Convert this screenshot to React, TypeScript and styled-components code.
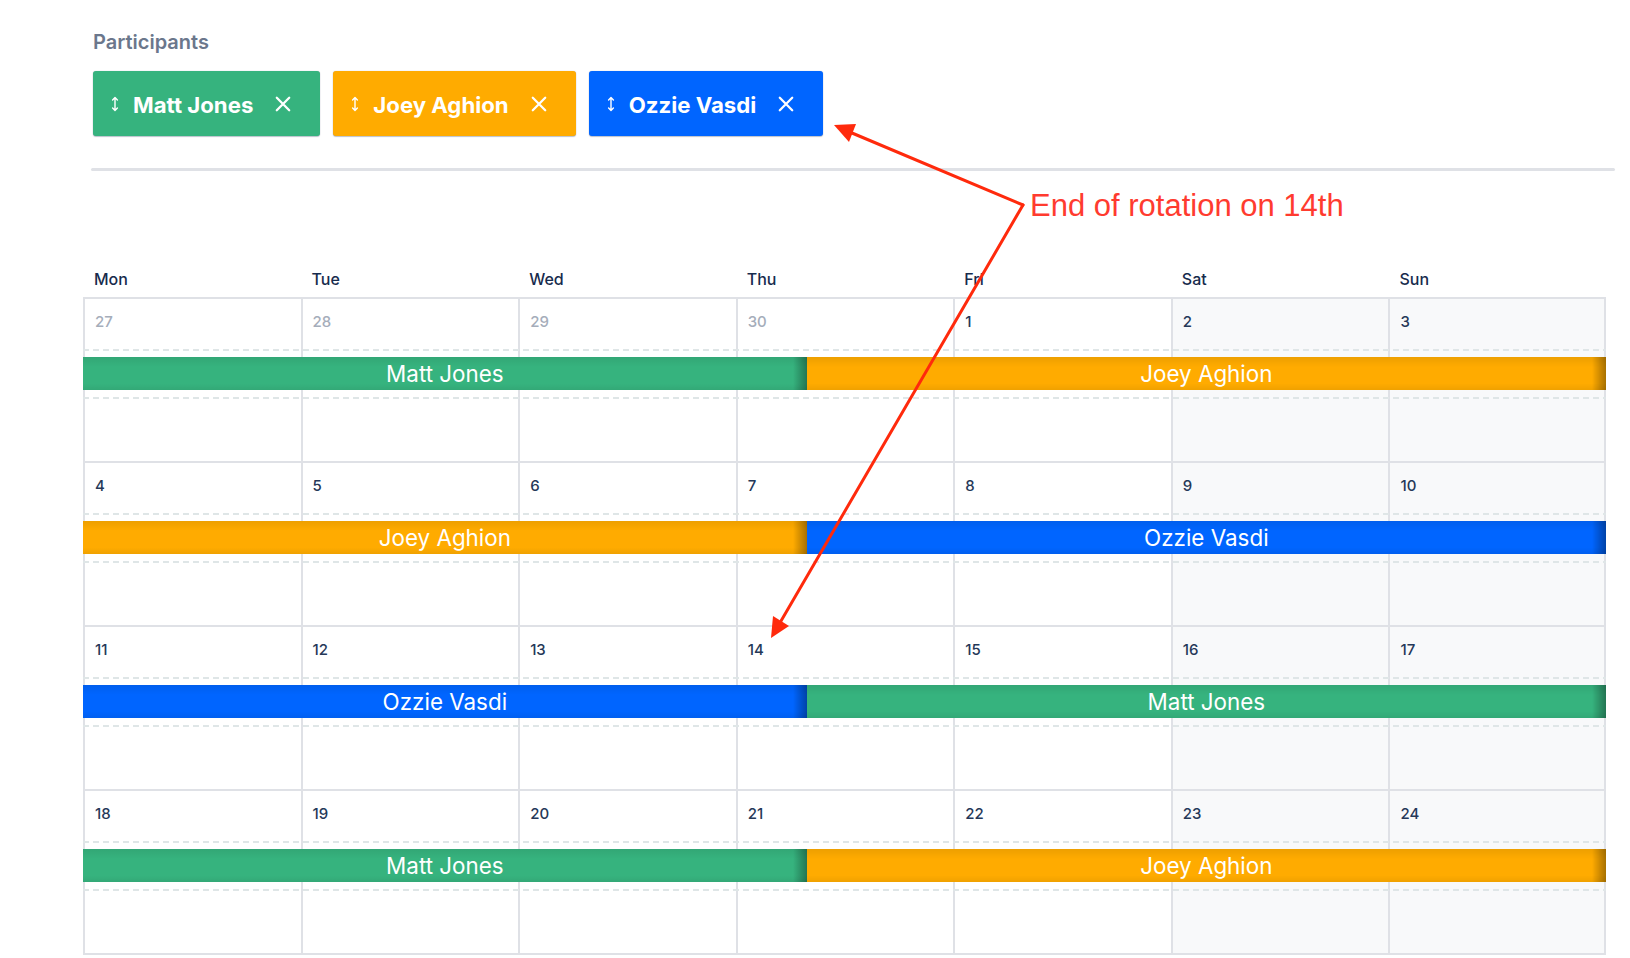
import React from 'react';
import styled, { createGlobalStyle } from 'styled-components';

const GlobalStyle = createGlobalStyle`
  html, body {
    margin: 0;
    padding: 0;
    background: #ffffff;
    overflow: hidden;
  }
  body {
    font-family: Inter, "Noto Sans", sans-serif;
    color: #172b4d;
    -webkit-font-smoothing: antialiased;
  }
  * { box-sizing: border-box; }
`;

type PersonKey = 'matt' | 'joey' | 'ozzie';

const PEOPLE: Record<PersonKey, { name: string; color: string }> = {
  matt: { name: 'Matt Jones', color: '#36b37e' },
  joey: { name: 'Joey Aghion', color: '#ffab00' },
  ozzie: { name: 'Ozzie Vasdi', color: '#0065ff' },
};

const PARTICIPANTS: PersonKey[] = ['matt', 'joey', 'ozzie'];
const WEEKDAYS = ['Mon', 'Tue', 'Wed', 'Thu', 'Fri', 'Sat', 'Sun'];

const WEEKS: { days: number[]; muted: number; bars: [PersonKey, PersonKey] }[] = [
  { days: [27, 28, 29, 30, 1, 2, 3], muted: 4, bars: ['matt', 'joey'] },
  { days: [4, 5, 6, 7, 8, 9, 10], muted: 0, bars: ['joey', 'ozzie'] },
  { days: [11, 12, 13, 14, 15, 16, 17], muted: 0, bars: ['ozzie', 'matt'] },
  { days: [18, 19, 20, 21, 22, 23, 24], muted: 0, bars: ['matt', 'joey'] },
];

/* split of the week: handover on Thursday */
const SPLIT: [number, number] = [723.7, 799.3];

const Page = styled.div`
  position: relative;
  width: 1630px;
  min-height: 958px;
  padding: 30px 24px 0 83px;
`;

const Header = styled.section`
  margin-left: 10px;
  margin-right: -9px;
`;

const Label = styled.div`
  font-size: 20px;
  line-height: 24px;
  font-weight: 600;
  color: #6b778c;
`;

const ChipRow = styled.div`
  display: flex;
  gap: 13px;
  margin-top: 17px;
`;

const Chip = styled.div<{ $color: string }>`
  display: flex;
  align-items: center;
  height: 65px;
  padding: 0 29px 0 18px;
  background: ${(p) => p.$color};
  border-radius: 3px;
  box-shadow: 0 1px 1px rgba(9, 30, 66, 0.25), 0 0 1px rgba(9, 30, 66, 0.31);
  color: #ffffff;
`;

const Handle = styled.svg`
  width: 8px;
  height: 16px;
  flex: none;
  margin-right: 14px;
`;

const ChipName = styled.span`
  padding-top: 3px;
  font-size: 22.2px;
  line-height: 1;
  font-weight: 700;
  white-space: nowrap;
`;

const Remove = styled.button`
  display: flex;
  flex: none;
  width: 16px;
  height: 16px;
  margin-left: 22px;
  padding: 0;
  border: 0;
  background: none;
  color: #ffffff;
  cursor: pointer;
`;

const Divider = styled.hr`
  margin: 32px 0 0 -2px;
  border: 0;
  height: 3px;
  background: #dfe1e6;
  border-radius: 2px;
`;

const Calendar = styled.section`
  margin-top: 98px;
`;

const DayHeaders = styled.div`
  display: grid;
  grid-template-columns: repeat(7, 1fr);
  margin-bottom: 8px;
`;

const DayHeader = styled.div`
  padding-left: 11px;
  font-size: 16px;
  line-height: 20px;
  font-weight: 500;
  color: #172b4d;
`;

const Weeks = styled.div`
  border-top: 2px solid #dfe1e6;
`;

const Week = styled.div`
  display: grid;
  grid-template-columns: repeat(7, 1fr);
  grid-template-rows: 50px 50px 64px;
`;

const DayCell = styled.div<{ $col: number; $weekend: boolean }>`
  grid-row: 1 / -1;
  grid-column: ${(p) => p.$col};
  padding: 12px 0 0 10px;
  background: ${(p) => (p.$weekend ? '#f8f9fa' : '#ffffff')};
  border-left: 2px solid #dfe1e6;
  border-bottom: 2px solid #dfe1e6;
  ${(p) => (p.$col === 7 ? 'border-right: 2px solid #dfe1e6;' : '')}
`;

const DayNumber = styled.span<{ $muted: boolean }>`
  font-size: 15px;
  line-height: 18px;
  font-weight: 500;
  color: ${(p) => (p.$muted ? '#a5adba' : '#253858')};
`;

const Lane = styled.div`
  grid-row: 2;
  grid-column: 1 / -1;
  display: flex;
  padding: 8px 0 9px;
  background-image:
    repeating-linear-gradient(to right, #dfe6e7 0 6px, transparent 6px 10px),
    repeating-linear-gradient(to right, #dfe6e7 0 6px, transparent 6px 10px);
  background-size: 100% 2px, 100% 2px;
  background-position: left top, left bottom;
  background-repeat: no-repeat;
`;

const Shift = styled.div<{ $color: string; $grow: number }>`
  flex: ${(p) => p.$grow} 1 0;
  height: 33px;
  display: flex;
  align-items: center;
  justify-content: center;
  background:
    linear-gradient(to left, rgba(0, 0, 0, 0.34), rgba(0, 0, 0, 0) 14px),
    linear-gradient(to bottom, rgba(0, 0, 0, 0.07), rgba(0, 0, 0, 0) 30%, rgba(0, 0, 0, 0) 80%, rgba(0, 0, 0, 0.06)),
    ${(p) => p.$color};
  color: #ffffff;
  font-size: 22.4px;
  line-height: 33px;
  white-space: nowrap;
`;

const Annotation = styled.svg`
  position: absolute;
  left: 0;
  top: 0;
  width: 1630px;
  height: 958px;
  pointer-events: none;
  overflow: visible;
`;

const AnnotationText = styled.text`
  font-family: "Liberation Sans", Arial, sans-serif;
  font-size: 31px;
  fill: #ff3b2f;
`;

function HandleIcon() {
  return (
    <Handle viewBox="0 0 8 16" fill="none">
      <path
        d="M4 1.6v12.8M1.6 4L4 1.6 6.4 4M1.6 12L4 14.4 6.4 12"
        stroke="currentColor"
        strokeWidth="1.4"
        strokeLinecap="round"
        strokeLinejoin="round"
      />
    </Handle>
  );
}

function CloseIcon() {
  return (
    <svg viewBox="0 0 16 16" width="16" height="16" fill="none">
      <path d="M1.8 1.8l12.4 12.4M14.2 1.8L1.8 14.2" stroke="currentColor" strokeWidth="2.3" strokeLinecap="round" />
    </svg>
  );
}

export default function App() {
  return (
    <>
      <GlobalStyle />
      <Page>
        <Header>
          <Label>Participants</Label>
          <ChipRow>
            {PARTICIPANTS.map((key) => (
              <Chip key={key} $color={PEOPLE[key].color}>
                <HandleIcon />
                <ChipName>{PEOPLE[key].name}</ChipName>
                <Remove aria-label={`Remove ${PEOPLE[key].name}`}>
                  <CloseIcon />
                </Remove>
              </Chip>
            ))}
          </ChipRow>
          <Divider />
        </Header>

        <Calendar>
          <DayHeaders>
            {WEEKDAYS.map((d) => (
              <DayHeader key={d}>{d}</DayHeader>
            ))}
          </DayHeaders>
          <Weeks>
            {WEEKS.map((week, wi) => (
              <Week key={wi}>
                {week.days.map((day, di) => (
                  <DayCell key={di} $col={di + 1} $weekend={di >= 5}>
                    <DayNumber $muted={di < week.muted}>{day}</DayNumber>
                  </DayCell>
                ))}
                <Lane>
                  {week.bars.map((p, bi) => (
                    <Shift key={bi} $color={PEOPLE[p].color} $grow={SPLIT[bi]}>
                      {PEOPLE[p].name}
                    </Shift>
                  ))}
                </Lane>
              </Week>
            ))}
          </Weeks>
        </Calendar>

        <Annotation viewBox="0 0 1630 958">
          <g stroke="#ff2a0c" strokeWidth="3" strokeLinecap="round" fill="none">
            <path d="M1023 205L852 133" />
            <path d="M1023 205L781 621" />
          </g>
          <g fill="#ff2a0c">
            <polygon points="834,125 856,124 849,142" />
            <polygon points="771,638 789,626 773,616" />
          </g>
          <AnnotationText x="1030" y="216">End of rotation on 14th</AnnotationText>
        </Annotation>
      </Page>
    </>
  );
}
